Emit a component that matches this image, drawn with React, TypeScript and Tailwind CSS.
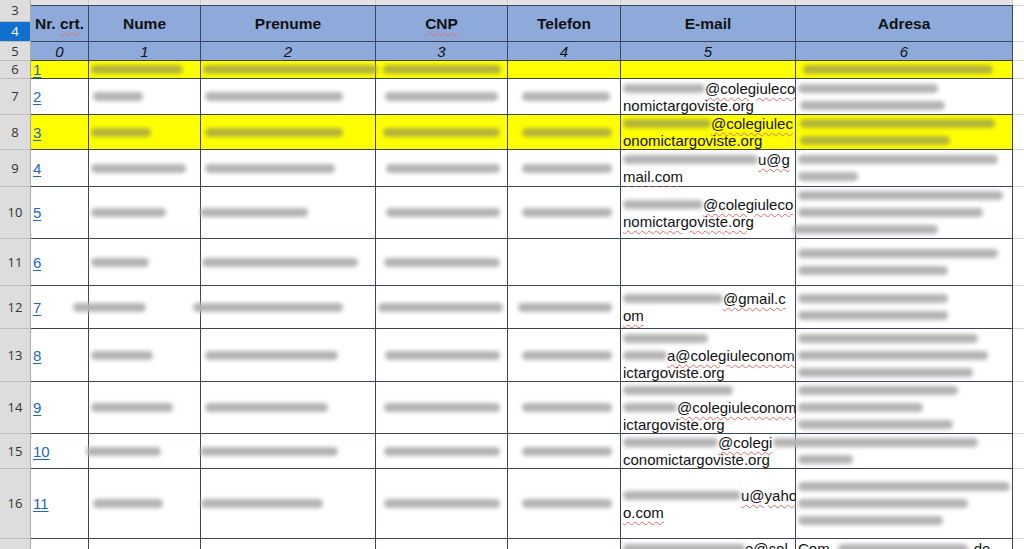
import type { ReactNode } from "react";

const LINE = "border-[#3a4657]";

// widths include the right border of each column
const colW = ["w-[58px]", "w-[112px]", "w-[175px]", "w-[132px]", "w-[113px]", "w-[175px]", "w-[217px]"];

type Bar = [number, number?];

function Smudge({ w, ml = 0, yellow }: { w: number; ml?: number; yellow?: boolean }) {
  return (
    <div
      className={`h-[9px] shrink-0 rounded-full blur-[2px] ${yellow ? "bg-[#b4b43a]" : "bg-[#b3b3b3]"}`}
      style={{ width: w, marginLeft: ml }}
    />
  );
}

function Mail({ children }: { children: ReactNode }) {
  return (
    <span className="underline decoration-wavy decoration-[#e46a6a] decoration-1 underline-offset-[3px]">
      {children}
    </span>
  );
}

type RowData = {
  n: number;
  h: string;
  link: string;
  yellow?: boolean;
  b: Bar;
  c: Bar;
  d: Bar;
  e?: Bar;
  f: [number, string][];
  g: Bar[];
};

const rows: RowData[] = [
  { n: 6, h: "h-[18px]", link: "1", yellow: true, b: [92, 0], c: [175, 0], d: [118, 5], f: [], g: [[190, 5]] },
  {
    n: 7, h: "h-[36px]", link: "2", b: [50, 2], c: [138, 2], d: [113, 7], e: [88, 12],
    f: [[82, "@colegiuleco"], [0, "nomictargoviste.org"]],
    g: [[140, 0], [145, 2]],
  },
  {
    n: 8, h: "h-[35px]", link: "3", yellow: true, b: [60, 0], c: [138, 2], d: [117, 5], e: [90, 12],
    f: [[88, "@colegiulec"], [0, "onomictargoviste.org"]],
    g: [[195, 2], [150, 2]],
  },
  {
    n: 9, h: "h-[37px]", link: "4", b: [95, 0], c: [130, 2], d: [114, 8], e: [90, 12],
    f: [[135, "u@g"], [0, "mail.com"]],
    g: [[200, 0], [60, 0]],
  },
  {
    n: 10, h: "h-[52px]", link: "5", b: [75, 0], c: [108, -3], d: [114, 8], e: [90, 12],
    f: [[80, "@colegiuleco"], [0, "nomictargoviste.org"]],
    g: [[205, 0], [185, 0], [145, -5]],
  },
  { n: 11, h: "h-[47px]", link: "6", b: [58, 0], c: [156, -1], d: [116, 6], f: [], g: [[200, 0], [150, 0]] },
  {
    n: 12, h: "h-[43px]", link: "7", b: [73, -18], c: [150, -10], d: [125, 0], e: [94, 8],
    f: [[100, "@gmail.c"], [0, "om"]],
    g: [[150, 0], [150, 0]],
  },
  {
    n: 13, h: "h-[53px]", link: "8", b: [62, 0], c: [133, 2], d: [115, 7], e: [90, 12],
    f: [[85, ""], [44, "a@colegiuleconom"], [0, "ictargoviste.org"]],
    g: [[180, 0], [190, 0], [175, 0]],
  },
  {
    n: 14, h: "h-[52px]", link: "9", b: [82, 0], c: [123, 2], d: [116, 6], e: [90, 12],
    f: [[110, ""], [54, "@colegiuleconom"], [0, "ictargoviste.org"]],
    g: [[160, 0], [125, 0], [155, 0]],
  },
  {
    n: 15, h: "h-[35px]", link: "10", b: [75, -5], c: [138, -3], d: [116, 6], e: [90, 12],
    f: [[95, "@colegi"], [0, "conomictargoviste.org"]],
    g: [[205, -25], [55, 0]],
  },
  {
    n: 16, h: "h-[70px]", link: "11", b: [70, 2], c: [122, -2], d: [116, 6], e: [90, 12],
    f: [[118, "u@yaho"], [0, "o.com"]],
    g: [[212, 0], [170, 0], [145, 0]],
  },
];

function Cell({ i, children, yellow, className = "" }: { i: number; children?: ReactNode; yellow?: boolean; className?: string }) {
  return (
    <div
      className={`${colW[i]} shrink-0 border-r border-b ${LINE} flex flex-col justify-center px-[2px] ${
        yellow ? "bg-[#ffff00]" : "bg-white"
      } ${className}`}
    >
      {children}
    </div>
  );
}

function RowHead({ label, h, active }: { label: string; h: string; active?: boolean }) {
  return (
    <div
      className={`${h} w-[31px] shrink-0 flex items-center justify-center border-r border-b border-r-[#a9a9a9] border-b-[#bdbdbd] font-['Open_Sans',sans-serif] text-[13px] ${
        active ? "bg-[#1170cf] text-white" : "bg-[#dddddd] text-[#333]"
      }`}
    >
      {label}
    </div>
  );
}

function Extra({ h }: { h: string }) {
  return <div className={`${h} flex-1 border-b border-[#d6d6d6] bg-white`} />;
}

function DataRow({ r }: { r: RowData }) {
  const y = r.yellow;
  return (
    <div className={`flex ${r.h}`}>
      <RowHead label={String(r.n)} h={r.h} />
      <Cell i={0} yellow={y}>
        <span className="text-[#1b66c6] underline underline-offset-2">{r.link}</span>
      </Cell>
      <Cell i={1} yellow={y}>
        <Smudge w={r.b[0]} ml={r.b[1]} yellow={y} />
      </Cell>
      <Cell i={2} yellow={y}>
        <Smudge w={r.c[0]} ml={r.c[1]} yellow={y} />
      </Cell>
      <Cell i={3} yellow={y}>
        <Smudge w={r.d[0]} ml={r.d[1]} yellow={y} />
      </Cell>
      <Cell i={4} yellow={y}>{r.e && <Smudge w={r.e[0]} ml={r.e[1]} yellow={y} />}</Cell>
      <Cell i={5} yellow={y} className="whitespace-nowrap">
        {r.f.map(([sw, text], k) => (
          <div key={k} className="flex h-[17px] items-center">
            {sw > 0 && <Smudge w={sw} yellow={y} />}
            {text && <Mail>{text}</Mail>}
          </div>
        ))}
      </Cell>
      <Cell i={6} yellow={y} className="gap-[8px]">
        {r.g.map((b, k) => (
          <Smudge key={k} w={b[0]} ml={b[1]} yellow={y} />
        ))}
      </Cell>
      <Extra h={r.h} />
    </div>
  );
}

const heads = ["Nr. crt.", "Nume", "Prenume", "CNP", "Telefon", "E-mail", "Adresa"];

export default function App() {
  return (
    <div className="h-[549px] w-[1024px] overflow-hidden bg-white font-['Liberation_Sans',Arial,sans-serif] text-[15px] leading-[17px] text-[#111]">
      {/* frozen header rows 3-4 */}
      <div className="flex h-[42px]">
        <div className="flex w-[31px] shrink-0 flex-col">
          <RowHead label="3" h="h-[22px]" />
          <RowHead label="4" h="h-[20px]" active />
        </div>
        <div className="flex flex-1 flex-col">
          <div className="flex h-[5px]">
            {colW.map((w) => (
              <div key={w} className={`${w} shrink-0 border-r border-[#cfcfcf] bg-[#e4e4e4]`} />
            ))}
            <div className="flex-1 bg-white" />
          </div>
          <div className="flex h-[37px]">
            {heads.map((t, i) => (
              <div
                key={t}
                className={`${colW[i]} shrink-0 flex items-center justify-center border-y border-r ${LINE} bg-[#8eaadb] text-[15.5px] font-bold`}
              >
                {t === "Nr. crt." ? (
                  <span>
                    Nr. <Mail>crt</Mail>.
                  </span>
                ) : t === "CNP" ? (
                  <Mail>CNP</Mail>
                ) : (
                  t
                )}
              </div>
            ))}
            <div className="flex-1 border-y border-t-[#d6d6d6] border-b-[#d6d6d6] bg-white" />
          </div>
        </div>
      </div>

      {/* index row */}
      <div className="flex h-[19px]">
        <RowHead label="5" h="h-[19px]" />
        {colW.map((w, i) => (
          <div key={w} className={`${w} shrink-0 flex items-center justify-center border-r border-b ${LINE} bg-[#8eaadb] italic`}>
            {i}
          </div>
        ))}
        <Extra h="h-[19px]" />
      </div>

      {rows.map((r) => (
        <DataRow key={r.n} r={r} />
      ))}

      {/* row 17, cut off at the bottom */}
      <div className="flex h-[40px]">
        <RowHead label="" h="h-[40px]" />
        {colW.map((w, i) => (
          <div key={w} className={`${w} shrink-0 border-r ${LINE} bg-white px-[2px] pt-[1px] whitespace-nowrap`}>
            {i === 5 && (
              <div className="flex h-[17px] items-center">
                <Smudge w={122} />
                <Mail>e@col</Mail>
              </div>
            )}
            {i === 6 && (
              <div className="flex h-[17px] items-center">
                <span>Com</span>
                <Smudge w={130} ml={8} />
                <span className="ml-[6px]">de</span>
              </div>
            )}
          </div>
        ))}
        <div className="flex-1 bg-white" />
      </div>
    </div>
  );
}
